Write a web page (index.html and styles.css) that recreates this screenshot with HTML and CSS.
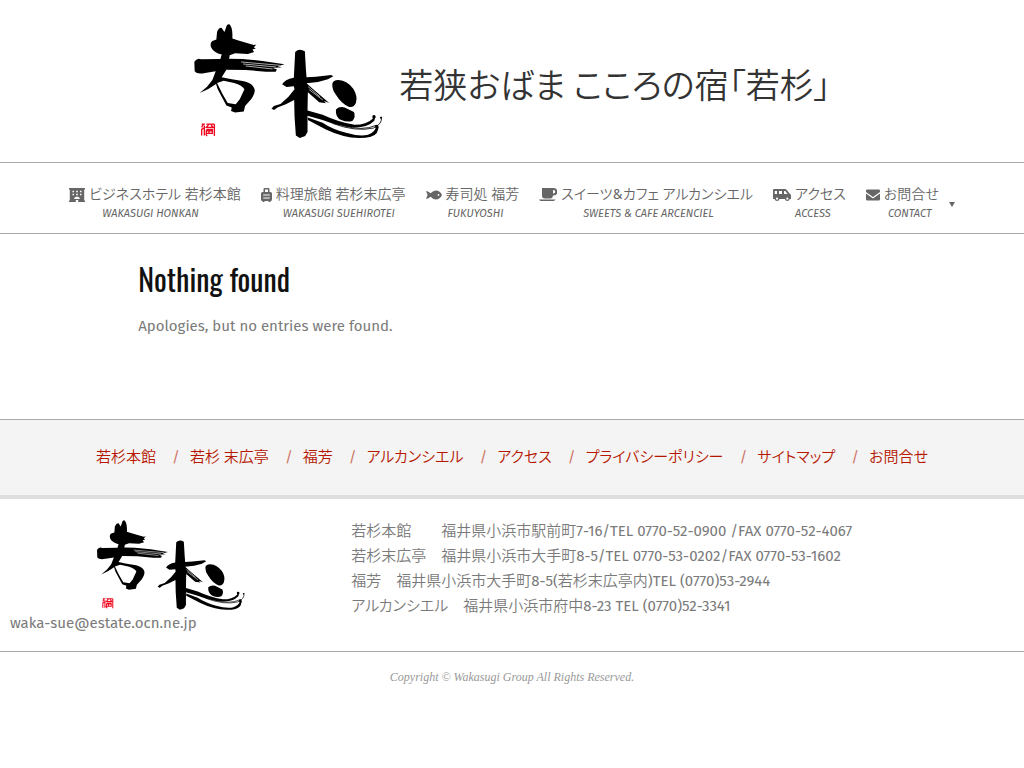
FILE: index.html
```html
<!DOCTYPE html>
<html lang="ja">
<head>
<meta charset="utf-8">
<meta name="viewport" content="width=device-width, initial-scale=1">
<title>若狭おばま こころの宿「若杉」</title>
<link rel="stylesheet" href="styles.css">
</head>
<body>
<svg class="defs" aria-hidden="true">
  <symbol id="logo" viewBox="32 40 572 346">
    <path d="M104 66Q110 52 118 54L126 66L130 56Q133 41 141 43Q149 50 150 72L150 86L168 92L214 105L222 104L214 112L220 116L210 119L215 126L196 132L158 130L142 136L140 146L180 147L240 153L306 163L286 169L298 172L270 174L283 178L280 185L250 185L190 180L132 179L118 202L144 207L185 214Q210 220 216 236Q220 248 206 268L188 288L184 304L158 307L146 303L148 292L132 286L106 238L101 222Q80 238 52 249L74 230L90 210L100 184L68 189Q44 194 37 184L36 155Q46 142 56 148L114 147L118 134Q94 128 86 112Q82 98 90 93L102 89ZM104 219L120 251L136 279L160 283L172 268L186 238Q180 226 155 219L124 212Z"/>
    <path d="M176 156L292 166M182 162L280 171M190 168L270 177" fill="none" stroke="#fff" stroke-width="2"/>
    <path d="M338 126Q350 114 367 124L370 176L372 202L400 200L446 195L452 199L436 208L406 216L372 220L392 238L440 279L424 273L430 280L410 277L376 247L375 301L420 314Q470 337 516 344Q552 344 570 326L572 316L578 320L575 332Q556 352 516 352Q470 350 420 330L375 317L375 366L368 378L352 384L340 376L336 318L335 270L310 283L285 292L275 300L267 296L274 288L294 282L318 260L336 238L334 229L312 231L299 223Q306 208 334 203Z"/>
    <path d="M380 239L421 270M377 230L412 260" fill="none" stroke="#fff" stroke-width="2"/>
    <path d="M449 224Q449 210 468 210Q494 212 512 236Q526 258 520 278Q514 294 498 290Q476 280 460 254Q449 240 449 224ZM460 298Q470 288 486 292L514 306Q520 320 510 332Q496 338 476 330Q458 322 460 298Z"/>
    <path d="M376 322L420 338Q450 358 490 368Q530 380 556 374Q578 366 580 350L584 344L588 352L583 368Q572 384 530 384Q480 382 430 358L376 330Z"/>
    <path d="M450 340Q520 366 572 354Q600 342 596 320M480 346Q540 364 580 346" fill="none" stroke="#000" stroke-width="2.5"/>
    <circle cx="574" cy="320" r="5"/><circle cx="582" cy="349" r="5"/><circle cx="595" cy="323" r="3"/>
    <path d="M58 342H68M63 342L58 352M66 346V376M58 376V358L64 354M72 342H96M80 342L72 352H92L86 344M96 342V378M72 358H90V362H72V370H90V358M74 378L70 370M80 362V370" fill="none" stroke="#f00820" stroke-width="4"/>
  </symbol>
</svg>

<header class="site-header">
  <a class="brand" href="#" aria-label="若杉"><svg class="brand-logo" aria-hidden="true"><use href="#logo"/></svg></a>
  <div class="site-title">若狭おばま こころの宿「若杉」</div>
</header>

<nav class="main-nav" aria-label="メインメニュー">
  <a class="nav-item" href="#">
    <span class="nav-label"><svg class="icon" width="16" height="14" viewBox="0 0 16 14"><path fill-rule="evenodd" d="M0 0H16V1.5H15.2V12.5H16V14H9.2V12H6.8V14H0V12.5H.8V1.5H0ZM3.5 2.7V4.3H5V2.7ZM7.2 2.7V4.3H8.8V2.7ZM11 2.7V4.3H12.5V2.7ZM3.5 5.7V7.3H5V5.7ZM7.2 5.7V7.3H8.8V5.7ZM11 5.7V7.3H12.5V5.7ZM5 11H11Q10.600 8.500 8 8.500Q5.400 8.500 5 11Z"/></svg>ビジネスホテル 若杉本館</span>
    <span class="nav-sub indent-3">WAKASUGI HONKAN</span>
  </a>
  <a class="nav-item" href="#">
    <span class="nav-label"><svg class="icon" width="11" height="14" viewBox="0 0 11 14"><path fill-rule="evenodd" d="M2.500 4V1.300Q2.500 0 3.800 0H7.200Q8.500 0 8.500 1.300V4H9.500Q11 4 11 5.500V11.500Q11 13 9.500 13V14H7.500V13H3.500V14H1.500V13Q0 13 0 11.500V5.500Q0 4 1.500 4ZM4 4H7V1.500H4ZM2.200 6.500V7.500H8.800V6.500ZM2.200 9.500V10.500H8.800V9.500Z"/></svg>料理旅館 若杉末広亭</span>
    <span class="nav-sub">WAKASUGI SUEHIROTEI</span>
  </a>
  <a class="nav-item" href="#">
    <span class="nav-label"><svg class="icon" width="16" height="14" viewBox="0 0 16 14"><path fill-rule="evenodd" d="M0 3Q2.500 3.500 4.600 5.300Q7 2.500 10 2.500Q14 2.700 16 7Q14 11.300 10 11.500Q7 11.500 4.600 8.700Q2.500 10.500 0 11Q.8 9 1.600 7Q.8 5 0 3ZM12.500 6A.9.9 0 1 0 12.500 7.800A.9.9 0 1 0 12.500 6Z"/></svg>寿司処 福芳</span>
    <span class="nav-sub">FUKUYOSHI</span>
  </a>
  <a class="nav-item" href="#">
    <span class="nav-label"><svg class="icon" width="18" height="14" viewBox="0 0 18 14"><path fill-rule="evenodd" d="M3 0H14.500A3.500 3.500 0 0 1 14.500 7.500H14Q13.700 10.500 11.300 10.500H5.700Q3 10.300 3 7.800ZM14 2V5.500H14.500A1.500 1.500 0 0 0 14.500 2ZM0 11.500H16.500L15 13H1.700Q.6 12.700 0 11.500Z"/></svg>スイーツ&amp;カフェ アルカンシエル</span>
    <span class="nav-sub indent-4">SWEETS &amp; CAFE ARCENCIEL</span>
  </a>
  <a class="nav-item" href="#">
    <span class="nav-label"><svg class="icon" width="18" height="14" viewBox="0 0 18 14"><path fill-rule="evenodd" d="M1 1H12Q13 1 13.800 2L17 6Q18 6.300 18 7.500V11H16.800A2.500 2.500 0 0 1 11.900 11H6.500A2.500 2.500 0 0 1 1.600 11H0V2Q0 1 1 1ZM1.700 3V6H4V3ZM6 3V6H9V3ZM11 3V6H14.600L12.300 3ZM4.050 9.600A1 1 0 1 0 4.050 11.800A1 1 0 1 0 4.050 9.600ZM14.350 9.600A1 1 0 1 0 14.350 11.800A1 1 0 1 0 14.350 9.600Z"/></svg>アクセス</span>
    <span class="nav-sub">ACCESS</span>
  </a>
  <a class="nav-item has-menu" href="#">
    <span>
      <span class="nav-label"><svg class="icon" width="14" height="14" viewBox="0 0 14 14"><path d="M1.300 1.500H12.700Q14 1.500 14 2.800V4L7 9L0 4V2.800Q0 1.500 1.300 1.500ZM0 5.500L7 10.400L14 5.500V11.200Q14 12.500 12.700 12.500H1.300Q0 12.500 0 11.200Z"/></svg>お問合せ</span>
      <span class="nav-sub">CONTACT</span>
    </span>
    <svg class="caret" width="6" height="5" viewBox="0 0 6 5" aria-hidden="true"><path d="M0 0H6L3 5Z"/></svg>
  </a>
</nav>

<main class="content">
  <h1 class="page-title">Nothing found</h1>
  <p class="message">Apologies, but no entries were found.</p>
</main>

<nav class="footer-nav" aria-label="フッターメニュー">
  <ul class="footer-links">
    <li><a href="#">若杉本館</a></li>
    <li><a href="#">若杉 末広亭</a></li>
    <li><a href="#">福芳</a></li>
    <li><a href="#">アルカンシエル</a></li>
    <li><a href="#">アクセス</a></li>
    <li><a href="#">プライバシーポリシー</a></li>
    <li><a href="#">サイトマップ</a></li>
    <li><a href="#">お問合せ</a></li>
  </ul>
</nav>

<footer>
  <div class="footer-info">
    <div class="contact">
      <svg class="footer-logo" role="img" aria-label="若杉"><use href="#logo"/></svg>
      <div>waka-sue@estate.ocn.ne.jp</div>
    </div>
    <address class="addresses">
      若杉本館　　福井県小浜市駅前町7-16/TEL 0770-52-0900 /FAX 0770-52-4067<br>
      若杉末広亭　福井県小浜市大手町8-5/TEL 0770-53-0202/FAX 0770-53-1602<br>
      福芳　福井県小浜市大手町8-5(若杉末広亭内)TEL (0770)53-2944<br>
      アルカンシエル　福井県小浜市府中8-23 TEL (0770)52-3341
    </address>
  </div>
  <p class="copyright">Copyright © Wakasugi Group All Rights Reserved.</p>
</footer>
</body>
</html>
```
FILE: styles.css
```css
* { box-sizing: border-box; }

body {
  margin: 0;
  background: #fff;
  color: #7a7a7a;
  font-family: "Fira Sans", "Noto Sans CJK JP DemiLight", "Noto Sans CJK JP", sans-serif;
  font-size: 15px;
  font-weight: 400;
  line-height: 25px;
  font-feature-settings: "palt";
}

a { color: inherit; text-decoration: none; }

.defs { position: absolute; width: 0; height: 0; }

.site-header {
  display: flex;
  align-items: center;
  justify-content: center;
  gap: 15px;
  padding: 23px 20px;
  border-bottom: 1px solid #aaa;
}

.brand { display: block; }
.brand-logo { display: block; width: 191px; height: 116px; }

.site-title {
  padding-top: 6px;
  color: #333;
  font-family: "Noto Sans CJK JP DemiLight", "Noto Sans CJK JP", sans-serif;
  font-size: 34px;
  line-height: 50px;
}

.main-nav {
  display: flex;
  flex-wrap: wrap;
  justify-content: center;
  gap: 20px;
  padding: 22px 20px 10px;
  border-bottom: 1px solid #aaa;
  color: #666;
}

.nav-item { display: block; }
.has-menu { display: flex; align-items: center; gap: 10px; }

.nav-label {
  display: flex;
  align-items: center;
  gap: 4px;
  font-size: 14px;
  line-height: 20px;
}

.nav-sub {
  display: block;
  padding-left: 2em;
  font-size: 11px;
  font-style: italic;
  line-height: 18px;
}
.indent-3 { padding-left: 3em; }
.indent-4 { padding-left: 4em; }

.icon, .caret { flex: none; fill: #666; }

.content {
  width: 73%;
  min-height: 185px;
  margin: 0 auto;
  padding-top: 23px;
}

.page-title {
  margin: 0 0 13px;
  color: #111;
  font-family: Oswald, "Liberation Sans Narrow", "Roboto Condensed", sans-serif;
  font-size: 30px;
  font-weight: 400;
  line-height: 44px;
}

.message { margin: 0; }

.footer-nav {
  padding: 25px 20px;
  border-top: 1px solid #aaa;
  border-bottom: 4px solid #dedede;
  background: #f4f4f4;
}

.footer-links {
  display: flex;
  flex-wrap: wrap;
  justify-content: center;
  margin: 0;
  padding: 0;
  list-style: none;
  color: #b51700;
}

.footer-links li + li::before {
  content: "/";
  padding: 0 10px 0 16px;
  opacity: 0.6;
}

.footer-info {
  display: grid;
  grid-template-columns: 1fr 2fr;
  padding: 20px 0 15px;
  border-bottom: 1px solid #aaa;
}

.contact { padding: 0 10px; }
.footer-logo { display: block; width: 150px; height: 92px; margin: 0 auto; }
.addresses { padding: 0 10px; font-style: normal; }

.copyright {
  margin: 0;
  padding: 13px 20px;
  color: #999;
  font-family: "Liberation Serif", serif;
  font-size: 12px;
  font-style: italic;
  text-align: center;
}
```
